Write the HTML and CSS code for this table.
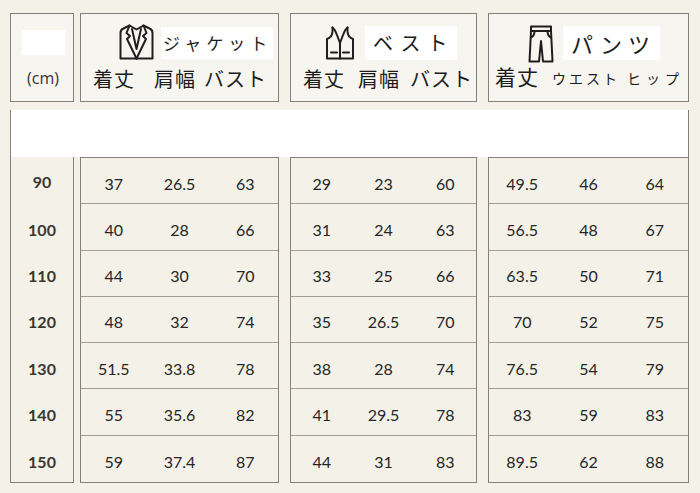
FILE: index.html
```html
<!DOCTYPE html>
<html lang="ja">
<head>
<meta charset="utf-8">
<link rel="stylesheet" href="styles.css">
</head>
<body>
<div class="page">
  <div class="header">
    <div class="hbox c1">
      <div class="blank"></div>
      <div class="unit">(cm)</div>
    </div>
    <div class="hbox c2 jacket">
      <div class="htop">
        <svg class="icon ic-jacket" viewBox="0 0 36 36" width="37" height="36">
          <path d="M2 9 Q2 5.5 5 4.5 L11 1.5 L18 5.5 L25 1.5 L31 4.5 Q34 5.5 34 9 L34 34.5 L2 34.5 Z" />
          <path d="M11 1.5 L8 9 L11.5 12 L8.5 15 L18 34.5" />
          <path d="M25 1.5 L28 9 L24.5 12 L27.5 15 L18 34.5" />
          <path d="M13.5 5 L18 25 L22.5 5" />
        </svg>
        <span class="title t-jacket">ジャケット</span>
      </div>
      <div class="labels">
        <span class="lb l-a">着丈</span><span class="lb l-b">肩幅</span><span class="lb">バスト</span>
      </div>
    </div>
    <div class="hbox c3 vest">
      <div class="htop">
        <svg class="icon ic-vest" viewBox="0 0 30 34" width="30" height="34">
          <path d="M7.5 1.5 L7.5 5 Q7.5 11 2 13 L2 32.5 L28 32.5 L28 13 Q22.5 11 22.5 5 L22.5 1.5" />
          <path d="M7.5 1.5 Q10.5 4 12 9 L15 17 L18 9 Q19.5 4 22.5 1.5" />
          <path d="M15 17 L15 32.5" />
          <path d="M6 26.5 L12 26.5 M18 26.5 L24 26.5" />
        </svg>
        <span class="title t-vest">ベスト</span>
      </div>
      <div class="labels">
        <span class="lb v-a">着丈</span><span class="lb v-b">肩幅</span><span class="lb">バスト</span>
      </div>
    </div>
    <div class="hbox c4 pants">
      <div class="htop">
        <svg class="icon ic-pants" viewBox="0 0 26 38" width="26" height="38">
          <path d="M3 1.5 L23 1.5 L23 6 L3 6 Z" />
          <path d="M3 6 L1.5 36.5 L11 36.5 L13 16 L15 36.5 L24.5 36.5 L23 6" />
          <path d="M6.5 6 Q6.5 11 3 12.5 M19.5 6 Q19.5 11 23 12.5" />
        </svg>
        <span class="title t-pants">パンツ</span>
      </div>
      <div class="labels">
        <span class="lb p-a">着丈</span><span class="lb small p-b">ウエスト</span><span class="lb small p-c">ヒップ</span>
      </div>
    </div>
  </div>

  <div class="band"></div>

  <div class="body">
    <div class="bbox c1 sizes">
      <div class="srow">90</div>
      <div class="srow">100</div>
      <div class="srow">110</div>
      <div class="srow">120</div>
      <div class="srow">130</div>
      <div class="srow">140</div>
      <div class="srow">150</div>
    </div>
    <div class="bbox c2 data">
      <div class="row"><span>37</span><span>26.5</span><span>63</span></div>
      <div class="row"><span>40</span><span>28</span><span>66</span></div>
      <div class="row"><span>44</span><span>30</span><span>70</span></div>
      <div class="row"><span>48</span><span>32</span><span>74</span></div>
      <div class="row"><span>51.5</span><span>33.8</span><span>78</span></div>
      <div class="row"><span>55</span><span>35.6</span><span>82</span></div>
      <div class="row"><span>59</span><span>37.4</span><span>87</span></div>
    </div>
    <div class="bbox c3 data">
      <div class="row"><span>29</span><span>23</span><span>60</span></div>
      <div class="row"><span>31</span><span>24</span><span>63</span></div>
      <div class="row"><span>33</span><span>25</span><span>66</span></div>
      <div class="row"><span>35</span><span>26.5</span><span>70</span></div>
      <div class="row"><span>38</span><span>28</span><span>74</span></div>
      <div class="row"><span>41</span><span>29.5</span><span>78</span></div>
      <div class="row"><span>44</span><span>31</span><span>83</span></div>
    </div>
    <div class="bbox c4 data">
      <div class="row"><span>49.5</span><span>46</span><span>64</span></div>
      <div class="row"><span>56.5</span><span>48</span><span>67</span></div>
      <div class="row"><span>63.5</span><span>50</span><span>71</span></div>
      <div class="row"><span>70</span><span>52</span><span>75</span></div>
      <div class="row"><span>76.5</span><span>54</span><span>79</span></div>
      <div class="row"><span>83</span><span>59</span><span>83</span></div>
      <div class="row"><span>89.5</span><span>62</span><span>88</span></div>
    </div>
  </div>
</div>
</body>
</html>
```

FILE: styles.css
```css
* { box-sizing: border-box; }
html, body { margin: 0; padding: 0; }
body {
  width: 700px;
  height: 493px;
  background: #f3f1e8;
  font-family: "Noto Sans CJK JP", "Noto Sans", sans-serif;
  color: #222;
  overflow: hidden;
}
.page {
  padding: 13px 0 0 10px;
}
.header, .body {
  display: flex;
}
.header { height: 89px; }
.c1 { width: 64px; }
.c2 { width: 199px; margin-left: 6px; }
.c3 { width: 187px; margin-left: 11px; }
.c4 { width: 201px; margin-left: 11px; }

.hbox {
  border: 1px solid #85817a;
  background: #f6f5ef;
  display: flex;
  flex-direction: column;
  overflow: hidden;
}
.hbox.c1 {
  align-items: center;
  padding-top: 16px;
}
.blank {
  width: 43px;
  height: 25px;
  background: #fff;
  margin-left: 2px;
}
.unit {
  margin-top: 12px;
  font-family: "Open Sans", "Liberation Sans", sans-serif;
  font-size: 16px;
  line-height: 22px;
  color: #333;
  margin-left: 2px;
  white-space: nowrap;
}
.htop {
  display: flex;
  align-items: center;
  height: 34px;
  margin-top: 12px;
}
.icon {
  fill: none;
  stroke: #1e1e1e;
  stroke-width: 2;
  stroke-linejoin: round;
  stroke-linecap: round;
  flex: none;
}
.title {
  background: #fff;
  line-height: 30px;
  color: #1c1c1c;
  white-space: nowrap;
  flex: none;
}
.jacket .htop { padding-left: 37px; }
.ic-jacket { margin-top: -2px; }
.t-jacket {
  font-size: 17px;
  letter-spacing: 5px;
  margin-left: 6px;
  padding: 1px 1px 1px 2px;
}
.vest .htop { padding-left: 34px; }
.t-vest {
  font-size: 20px;
  letter-spacing: 7px;
  margin-left: 10px;
  padding: 2px 3px 2px 8px;
}
.pants .htop { padding-left: 39px; }
.ic-pants { margin-top: 2px; }
.t-pants {
  font-size: 22px;
  letter-spacing: 6px;
  margin-left: 9px;
  padding: 2px 4px 2px 8px;
}
.labels {
  display: flex;
  align-items: center;
  height: 26px;
  margin-top: 6px;
}
.lb {
  font-size: 20px;
  line-height: 26px;
  color: #1c1c1c;
  letter-spacing: 1px;
  white-space: nowrap;
  flex: none;
}
.jacket .labels { padding-left: 12px; }
.l-a { margin-right: 19px; }
.l-b { margin-right: 8px; }
.vest .labels { padding-left: 12px; }
.v-a { margin-right: 13px; }
.v-b { margin-right: 10px; }
.pants .labels { padding-left: 6px; margin-top: 3px; }
.p-a { font-size: 21px; margin-right: 13px; }
.lb.small { font-size: 14px; }
.p-b { letter-spacing: 3px; margin-right: 7px; margin-top: 3px; }
.p-c { letter-spacing: 5px; margin-top: 3px; }

.band {
  margin-top: 8px;
  width: 679px;
  height: 47px;
  background: #fff;
  border-left: 1px solid #85817a;
  border-right: 1px solid #85817a;
}
.body { height: 326px; }
.bbox {
  border: 1px solid #85817a;
  display: grid;
  grid-template-rows: repeat(7, 1fr);
}
.sizes {
  border-top: none;
  font-family: "Lato", "Noto Sans", sans-serif;
  font-weight: 700;
  font-size: 16px;
  color: #3b3631;
}
.srow {
  display: flex;
  align-items: center;
  justify-content: center;
  padding-top: 5px;
}
.sizes .srow:first-child { padding-top: 2px; }
.data {
  font-family: "Lato", "Noto Sans", sans-serif;
  font-size: 16px;
  color: #262626;
}
.row {
  display: grid;
  grid-template-columns: repeat(3, 1fr);
  border-bottom: 1px solid #a39f97;
}
.row:last-child { border-bottom: none; }
.row span {
  display: flex;
  align-items: center;
  justify-content: center;
  padding-top: 5px;
}
```
